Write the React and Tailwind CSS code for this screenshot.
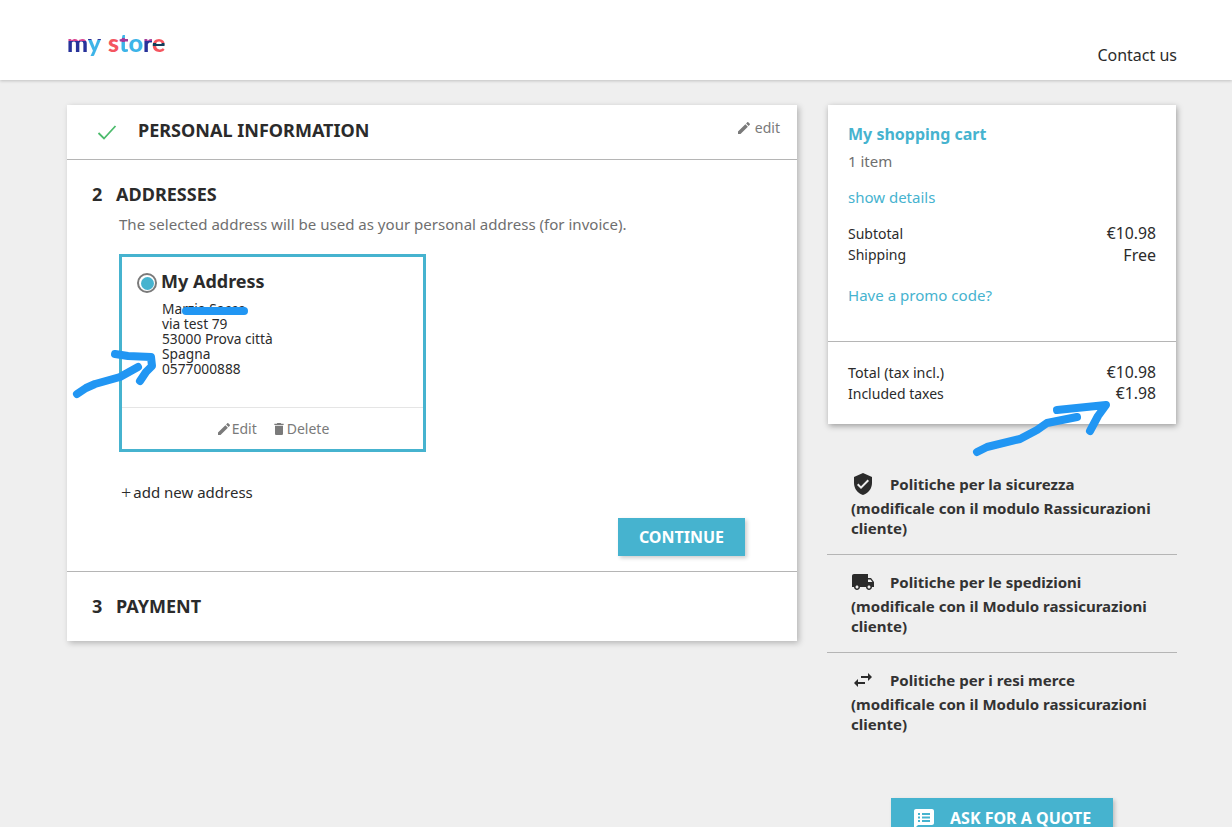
import React from "react";

const Icon = ({ d, className, rule }) => (
  <svg viewBox="0 0 24 24" className={className} fill="currentColor" aria-hidden="true">
    <path d={d} fillRule={rule} />
  </svg>
);

const EDIT = "M3 17.25V21h3.75L17.81 9.94l-3.75-3.75L3 17.25zM20.71 7.04c.39-.39.39-1.02 0-1.41l-2.34-2.34c-.39-.39-1.02-.39-1.41 0l-1.83 1.83 3.75 3.75 1.83-1.83z";
const DELETE = "M6 19c0 1.1.9 2 2 2h8c1.1 0 2-.9 2-2V7H6v12zM19 4h-3.5l-1-1h-5l-1 1H5v2h14V4z";
const SHIELD = "M12 1L3 5v6c0 5.55 3.84 10.74 9 12 5.16-1.26 9-6.45 9-12V5l-9-4zm-2 16l-4-4 1.41-1.41L10 14.17l6.59-6.59L18 9l-8 8z";
const TRUCK = "M20 8h-3V4H3c-1.1 0-2 .9-2 2v11h2c0 1.66 1.34 3 3 3s3-1.34 3-3h6c0 1.66 1.34 3 3 3s3-1.34 3-3h2v-5l-3-4zM6 18.5c-.83 0-1.5-.67-1.5-1.5s.67-1.5 1.5-1.5 1.5.67 1.5 1.5-.67 1.5-1.5 1.5zm13.5-9l1.96 2.5H17V9.5h2.5zm-1.5 9c-.83 0-1.5-.67-1.5-1.5s.67-1.5 1.5-1.5 1.5.67 1.5 1.5-.67 1.5-1.5 1.5z";
const SWAP = "M6.99 11L3 15l3.99 4v-3H14v-2H6.99v-3zM21 9l-3.99-4v3H10v2h7.01v3L21 9z";
const QUOTE = "M20 2H4c-1.1 0-1.99.9-1.99 2L2 22l4-4h14c1.1 0 2-.9 2-2V4c0-1.1-.9-2-2-2zM6 6h2v2H6zM10 6h8v2h-8zM6 9.5h2v2H6zM10 9.5h8v2h-8zM6 13h2v2H6zM10 13h8v2h-8z";

const Reassurance = ({ icon, title, line, border }) => (
  <div className={`pl-6 pr-4 pt-[17px] h-[98px] text-[15.05px] leading-5 font-bold text-[#333333] ${border ? "border-b border-[#b5b5b5]" : ""}`}>
    <div className="flex items-center h-5">
      <Icon d={icon} className="w-6 h-6 mr-[15px] text-[#2b2b2b]" />
      <span>{title}</span>
    </div>
    <div className="mt-1">{line}</div>
    <div>cliente)</div>
  </div>
);

export default function App() {
  return (
    <div className="relative h-[827px] overflow-hidden bg-[#efefef] text-[#2b2b2b] font-['Noto_Sans','Open_Sans',sans-serif]">
      <header className="h-20 bg-white shadow-[0_1px_3px_rgba(0,0,0,0.2)] flex justify-between px-[55px] relative">
        <div className="pl-3 pt-[22px] text-[25px] leading-10 font-black font-['Lato',sans-serif]">
          <span className="bg-clip-text text-transparent bg-[linear-gradient(180deg,#d9428f_0%,#d9428f_48%,#27329a_48%,#27329a_100%)]">m</span>
          <span className="bg-clip-text text-transparent bg-[linear-gradient(180deg,#27329a_0%,#27329a_45%,#3db4e8_45%,#3db4e8_100%)]">y</span>
          <span className="ml-[7px] text-[#f4555f]">s</span>
          <span className="bg-clip-text text-transparent bg-[linear-gradient(180deg,#3db4e8_0%,#3db4e8_36%,#a43a9a_36%,#a43a9a_50%,#3db4e8_50%,#3db4e8_100%)]">t</span>
          <span className="text-[#3db4e8]">o</span>
          <span className="bg-clip-text text-transparent bg-[linear-gradient(180deg,#a43a9a_0%,#a43a9a_48%,#27329a_48%,#27329a_100%)]">r</span>
          <span className="bg-clip-text text-transparent bg-[linear-gradient(180deg,#f4555f_0%,#f4555f_52%,#143c5a_52%,#143c5a_62%,#f4555f_62%,#f4555f_100%)]">e</span>
        </div>
        <div className="pt-[44px] text-[16px] leading-[22px]">Contact us</div>
      </header>

      <main className="flex items-start gap-[30px] pl-[67px] pr-[55px] pt-[25px]">
        <section className="w-[730px] bg-white shadow-[2px_2px_6px_rgba(0,0,0,0.25)]">
          <div className="h-[55px] border-b border-[#b5b5b5] flex items-start pl-[30px] pr-[17px]">
            <svg viewBox="0 0 20 15" className="w-5 h-[15px] mt-5 mr-[21px] text-[#4cbb6c]" fill="none" stroke="currentColor" strokeWidth="1.8">
              <path d="M1.5 8l5.5 5.5L18.5 1" />
            </svg>
            <h2 className="text-[18.05px] leading-[26px] font-bold mt-3 flex-1">PERSONAL INFORMATION</h2>
            <div className="flex items-center mt-[13px] text-[14px] leading-5 text-[#7a7a7a]">
              <Icon d={EDIT} className="w-4 h-4 mr-[3px]" />
              edit
            </div>
          </div>

          <div className="h-[412px] border-b border-[#b5b5b5] pt-[21px] pl-[25px]">
            <h2 className="text-[18.05px] leading-[26px] font-bold flex">
              <span className="w-[24px]">2</span>ADDRESSES
            </h2>
            <div className="ml-[27px]">
              <p className="mt-[6px] text-[15.05px] leading-[22px] text-[#6f6f6f]">
                The selected address will be used as your personal address (for invoice).
              </p>
              <div className="mt-[19px] w-[307px] h-[198px] border-[3px] border-[#46b3cf]">
                <div className="h-[151px] border-b border-[#e5e5e5] pl-[15px] pt-[11px]">
                  <div className="flex items-center">
                    <span className="w-5 h-5 rounded-full border-2 border-[#7a7a7a] flex items-center justify-center mr-1 mt-[5px] self-start">
                      <span className="w-[13px] h-[13px] rounded-full bg-[#46b3cf]" />
                    </span>
                    <span className="text-[18px] leading-[26px] font-bold">My Address</span>
                  </div>
                  <address className="not-italic ml-[25px] mt-[7px] text-[13.75px] leading-[15px]">
                    Marzia Sacco<br />via test 79<br />53000 Prova città<br />Spagna<br />0577000888
                  </address>
                </div>
                <div className="h-[41px] flex items-center justify-center text-[14px] text-[#7a7a7a]">
                  <Icon d={EDIT} className="w-4 h-4" />
                  <span>Edit</span>
                  <Icon d={DELETE} className="w-4 h-4 ml-[14px]" />
                  <span>Delete</span>
                </div>
              </div>
              <div className="mt-[29px] text-[15px] leading-[22px] flex items-center">
                <span className="mr-[2px] ml-[2px] text-[18px] font-light">+</span>add new address
              </div>
            </div>
            <div className="flex justify-end mt-[15px] pr-[52px]">
              <button className="w-[127px] h-[38px] bg-[#46b3cf] text-white text-[16px] font-bold shadow-[2px_2px_4px_rgba(0,0,0,0.2)]">
                CONTINUE
              </button>
            </div>
          </div>

          <div className="h-[69px] pl-[25px] pt-[21px]">
            <h2 className="text-[18.05px] leading-[26px] font-bold flex">
              <span className="w-[24px]">3</span>PAYMENT
            </h2>
          </div>
        </section>

        <aside className="w-[350px]">
          <div className="bg-white mx-px shadow-[1px_2px_6px_rgba(0,0,0,0.35)] h-[319px]">
            <div className="h-[237px] border-b border-[#b5b5b5] px-5 pt-[18px] text-[14px]">
              <h3 className="text-[16px] leading-[22px] font-bold text-[#46b3cf]">My shopping cart</h3>
              <p className="mt-[6px] text-[15px] leading-5 text-[#6f6f6f]">1 item</p>
              <p className="mt-4 text-[15px] leading-5 text-[#46b3cf]">show details</p>
              <div className="mt-[16px] flex justify-between items-center h-[21px]">
                <span>Subtotal</span><span className="text-[15.75px]">€10.98</span>
              </div>
              <div className="flex justify-between items-center h-[21px]">
                <span>Shipping</span><span className="text-[16px]">Free</span>
              </div>
              <p className="mt-[20px] text-[15.05px] leading-5 text-[#46b3cf]">Have a promo code?</p>
            </div>
            <div className="px-5 pt-5 text-[14px]">
              <div className="flex justify-between items-center h-[21px]">
                <span className="text-[14.3px]">Total (tax incl.)</span><span className="text-[15.75px]">€10.98</span>
              </div>
              <div className="flex justify-between items-center h-[21px]">
                <span>Included taxes</span><span className="text-[15.75px]">€1.98</span>
              </div>
            </div>
          </div>

          <div className="mt-[33px]">
            <Reassurance icon={SHIELD} title="Politiche per la sicurezza" line="(modificale con il modulo Rassicurazioni" border />
            <Reassurance icon={TRUCK} title="Politiche per le spedizioni" line="(modificale con il Modulo rassicurazioni" border />
            <Reassurance icon={SWAP} title="Politiche per i resi merce" line="(modificale con il Modulo rassicurazioni" />
          </div>

          <div className="mt-[47px] ml-16 w-[222px] h-[40px] bg-[#46b3cf] text-white flex items-center shadow-[2px_2px_4px_rgba(0,0,0,0.2)] pl-[21px]">
            <Icon d={QUOTE} className="w-6 h-6 mr-[14px] mt-[2px]" rule="evenodd" />
            <span className="text-[16px] font-bold mt-[-1px]">ASK FOR A QUOTE</span>
          </div>
        </aside>
      </main>

      <svg className="absolute left-0 top-0 w-[1232px] h-[827px] pointer-events-none" viewBox="0 0 1232 827" fill="none" stroke="#2196f3" strokeWidth="8" strokeLinecap="round" strokeLinejoin="round">
        <path d="M186 311H244" />
        <path d="M77 394L86 388L95 384L120 377L138 367" />
        <path d="M115 354L128 356L151 357L152 366L146 372L140 381" />
        <path d="M977 452L987 447L1020 439L1037 430L1047 423L1077 417" />
        <path d="M1057 410L1106 405L1098 416L1090 431" />
      </svg>
    </div>
  );
}
